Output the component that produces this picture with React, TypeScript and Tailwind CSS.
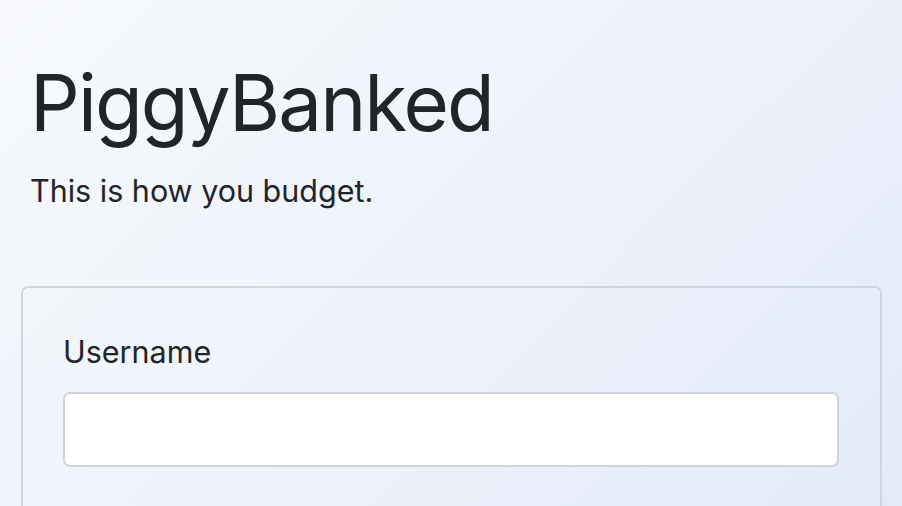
import React from "react";

export default function App() {
  return (
    <div
      className="w-[902px] h-[506px] overflow-hidden bg-[linear-gradient(135deg,#f7f9fc_0%,#eef3fb_50%,#e4eafa_100%)] text-[#212529]"
      style={{ fontFamily: "Inter, 'Noto Sans', sans-serif" }}
    >
      <div className="px-[21px] pt-[55px]">
        <div className="pl-[9px]">
          <h1 className="text-[78px] leading-[96px] font-normal tracking-[-1.9px]">PiggyBanked</h1>
          <p className="mt-[20px] text-[30.5px] leading-[40px]">This is how you budget.</p>
        </div>
        <div className="mt-[75px] w-[861px] rounded-[7px] border-2 border-[#cfd5de] px-[40px] pt-[44px] h-[300px]">
          <label className="block text-[30.5px] leading-[40px]">Username</label>
          <input
            type="text"
            className="mt-[20px] block w-[776px] h-[75px] rounded-[7px] border-2 border-[#cfd4dc] bg-white"
          />
        </div>
      </div>
    </div>
  );
}
